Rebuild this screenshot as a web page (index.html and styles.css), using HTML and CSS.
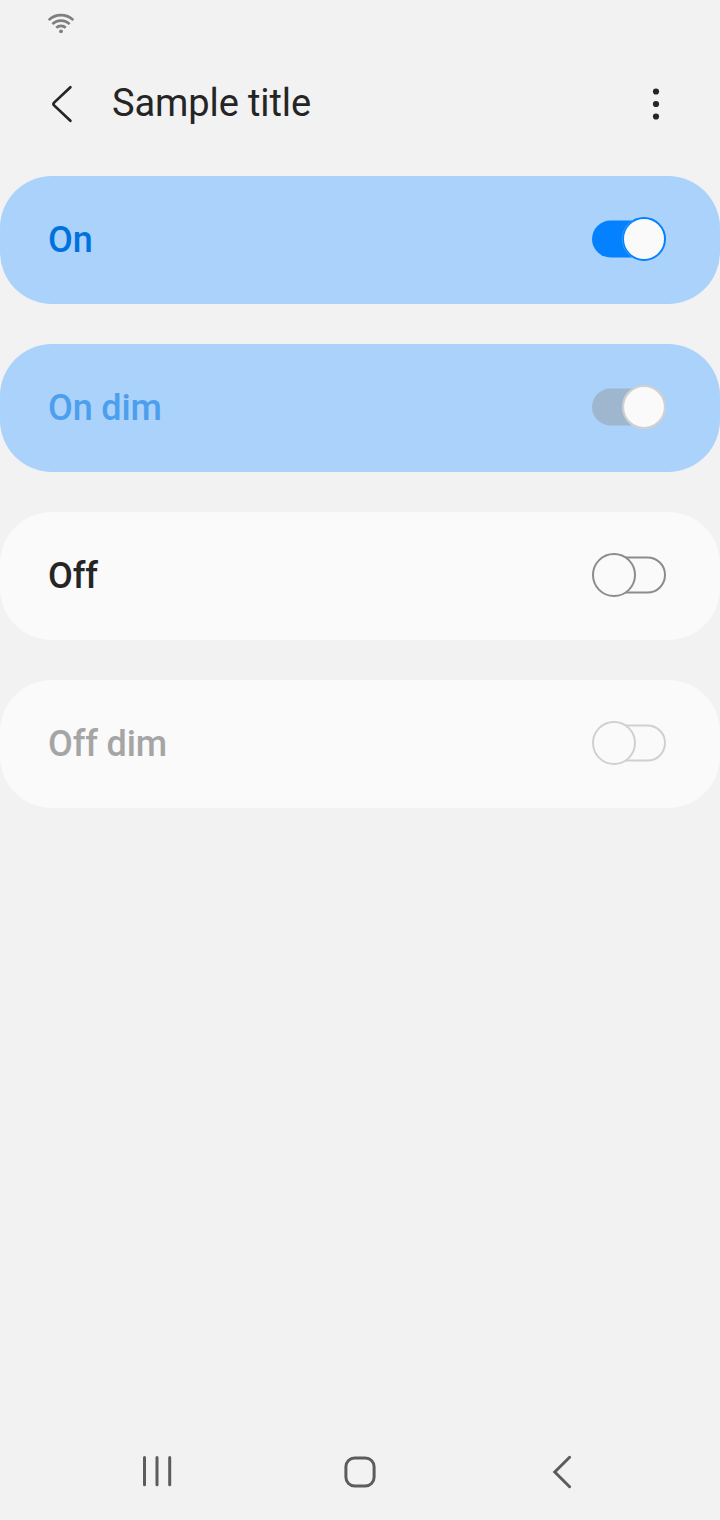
FILE: index.html
```html
<!DOCTYPE html>
<html lang="en">
<head>
<meta charset="utf-8">
<title>Sample title</title>
<link rel="stylesheet" href="styles.css">
</head>
<body>
<div class="screen">
  <div class="status">
    <svg class="wifi" width="28" height="22" viewBox="0 0 28 22" fill="none" stroke="#7e7e7e" stroke-width="2.7">
      <path d="M1.7 8.1A17.6 17.6 0 0 1 26.3 8.1"/>
      <path d="M5.4 12.1A12.2 12.2 0 0 1 22.6 12.1"/>
      <path d="M9.3 15.8A6.7 6.7 0 0 1 18.7 15.8"/>
      <circle cx="14" cy="19.3" r="1.9" fill="#7e7e7e" stroke="none"/>
    </svg>
  </div>
  <header class="toolbar">
    <svg class="back" width="24" height="40" viewBox="0 0 24 40"><path d="M20.4 3.2 4.1 18.6Q2.8 20 4.1 21.4L20.4 36.8"/></svg>
    <h1 class="title">Sample title</h1>
    <svg class="more" width="8" height="32" viewBox="0 0 8 32"><circle cx="4" cy="3.5" r="3.1"/><circle cx="4" cy="16" r="3.1"/><circle cx="4" cy="28.5" r="3.1"/></svg>
  </header>
  <main class="list">
    <div class="card on"><span class="label">On</span>
      <svg class="switch" width="76" height="46" viewBox="0 0 76 46"><rect x="1" y="4.5" width="70" height="37" rx="18.5" fill="#0381fe"/><circle cx="53" cy="23" r="21" fill="#fafafa" stroke="#0381fe" stroke-width="2"/><path d="M42 4.2A21.8 21.8 0 0 0 42 41.8" fill="none" stroke="#62b2ff" stroke-width=".5"/></svg>
    </div>
    <div class="card on dim"><span class="label">On dim</span>
      <svg class="switch" width="76" height="46" viewBox="0 0 76 46"><rect x="1" y="4.5" width="70" height="37" rx="18.5" fill="#9fb6cf"/><circle cx="53" cy="23" r="21" fill="#fafafa" stroke="#d0d0d0" stroke-width="2.2"/></svg>
    </div>
    <div class="card off"><span class="label">Off</span>
      <svg class="switch" width="76" height="46" viewBox="0 0 76 46" fill="#fafafa" stroke="#8c8c8c" stroke-width="2"><rect x="6" y="5.4" width="68" height="35.2" rx="17.6"/><circle cx="23" cy="23" r="21"/></svg>
    </div>
    <div class="card off dim"><span class="label">Off dim</span>
      <svg class="switch" width="76" height="46" viewBox="0 0 76 46" fill="#fafafa" stroke="#d0d0d0" stroke-width="2"><rect x="6" y="5.4" width="68" height="35.2" rx="17.6"/><circle cx="23" cy="23" r="21"/></svg>
    </div>
  </main>
  <nav class="navbar">
    <svg width="32" height="34" viewBox="0 0 32 34"><path d="M2.5 2.5V29.7M15 2.5V29.7M27.7 2.5V29.7"/></svg>
    <svg width="34" height="34" viewBox="0 0 34 34"><rect x="2.9" y="2.9" width="28.2" height="28.2" rx="8.8"/></svg>
    <svg width="22" height="36" viewBox="0 0 22 36"><path d="M19.6 3.3 4.8 18 19.6 32.7"/></svg>
  </nav>
</div>
</body>
</html>
```

FILE: styles.css
```css
body {
  margin: 0;
  background: #f2f2f2;
  font-family: Roboto, sans-serif;
  color: #252525;
}
svg { display: block; flex: none; }
.screen {
  display: flex;
  flex-direction: column;
  width: 720px;
  height: 1520px;
}
.status {
  height: 36px;
  padding: 12px 47px 0;
}
.toolbar {
  display: flex;
  align-items: center;
  height: 112px;
  padding: 0 60px 0 50px;
}
.back {
  fill: none;
  stroke: #252525;
  stroke-width: 2.7;
  stroke-linecap: round;
}
.title {
  flex: 1;
  margin: 0 0 0 38px;
  padding-bottom: 2px;
  font-size: 38px;
  font-weight: 400;
  line-height: 44px;
  letter-spacing: -0.1px;
}
.more { fill: #252525; }
.list {
  display: flex;
  flex: 1;
  flex-direction: column;
  gap: 40px;
  padding-top: 16px;
}
.card {
  display: flex;
  align-items: center;
  justify-content: space-between;
  box-sizing: border-box;
  height: 128px;
  padding: 0 53px 2px 48px;
  border-radius: 52px;
  font-size: 36px;
  font-weight: 500;
  line-height: 42px;
  letter-spacing: -0.15px;
}
.label { padding-top: 2px; }
.on { background: #abd2fb; color: #0072de; }
.on.dim { color: #4c9fec; }
.off { background: #fafafa; }
.off.dim { color: #a5a5a5; }
.navbar {
  display: grid;
  grid-template-columns: 32px 34px 22px;
  column-gap: 169px;
  align-items: center;
  height: 96px;
  padding-left: 142px;
  fill: none;
  stroke: #5c5c5c;
  stroke-width: 3;
  stroke-linecap: round;
}
.navbar svg:last-child { margin-left: 4px; margin-right: -4px; }
```
